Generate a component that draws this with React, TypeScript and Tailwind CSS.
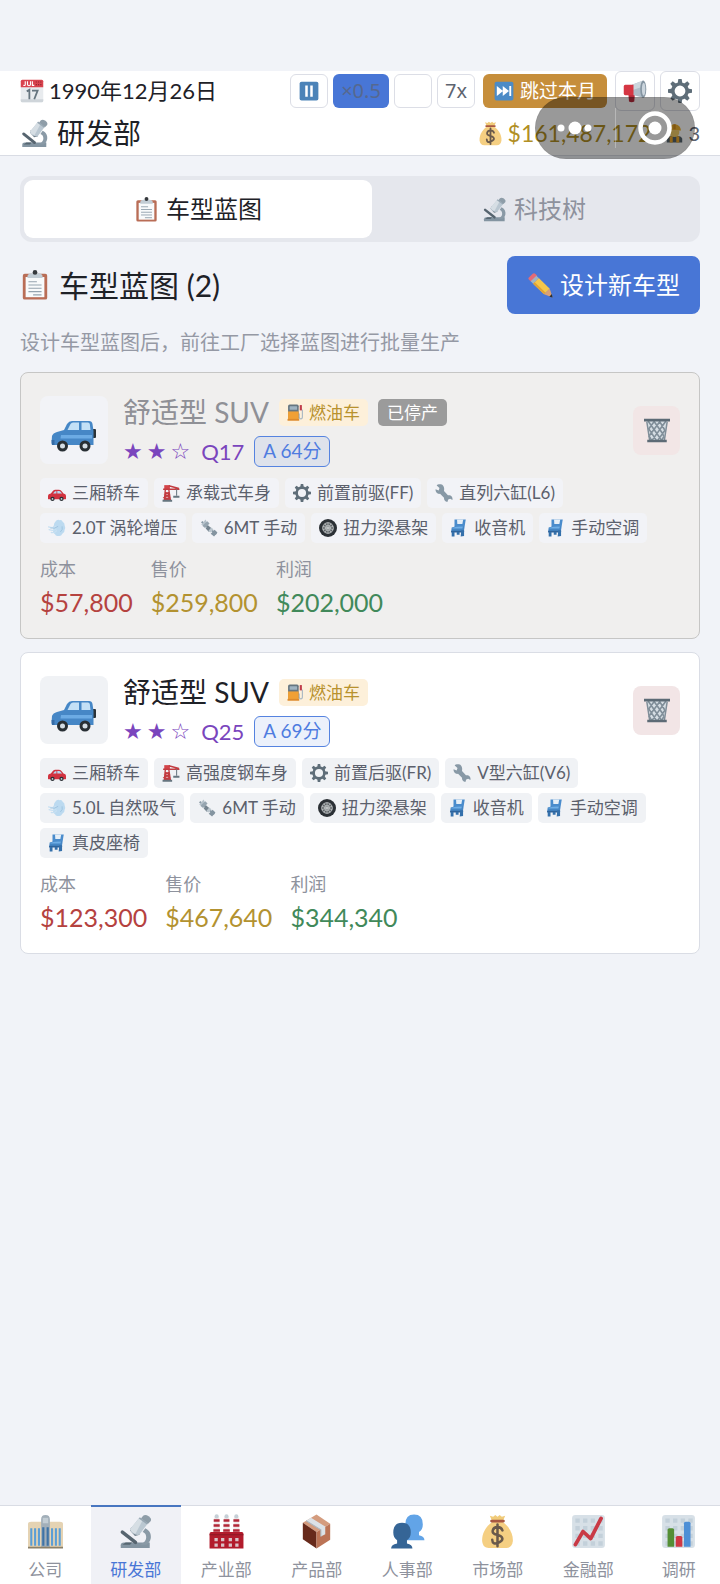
import type { ReactNode } from 'react';

type IconProps = { className?: string };

function Svg({ className = 'size-6', children }: { className?: string; children: ReactNode }) {
  return (
    <svg viewBox="0 0 32 32" className={`shrink-0 ${className}`} aria-hidden="true">
      {children}
    </svg>
  );
}

function CalendarIcon({ className }: IconProps) {
  return (
    <Svg className={className}>
      <path d="M1 10h30v19a2 2 0 0 1-2 2H3a2 2 0 0 1-2-2z" fill="#e8ebee" />
      <path d="M1 27h30v2a2 2 0 0 1-2 2H3a2 2 0 0 1-2-2z" fill="#cfd5da" />
      <path d="M1 3a2 2 0 0 1 2-2h26a2 2 0 0 1 2 2v8H1z" fill="#d9434e" />
      <path d="M7 3v4.500q0 1.500-2.500 1M10 3v4q0 2 2 2t2-2V3M16.500 3v5.500H19" fill="none" stroke="#fff" strokeWidth="1.500" />
      <path d="M21 4h1.500M24 4h1.500M27 4h1.500M21 7.500h1.500M24 7.500h1.500M27 7.500h1.500" stroke="#8e2730" strokeWidth="1.500" />
      <path d="M9 16.500l3.500-2V27M16 15.500h7.500L19 27" fill="none" stroke="#66757f" strokeWidth="2.400" />
    </Svg>
  );
}

function MicroscopeIcon({ className }: IconProps) {
  return (
    <Svg className={className}>
      <path d="M2.500 28.500q0-2.500 3-2.500h23.500v5H2.500z" fill="#8394a1" />
      <path d="M7 26h6l-2 2H4z" fill="#566671" />
      <path d="M20 28c5-2 6.500-5 5.500-8.500-.4-1.600-1.500-2.500-3-3l2.500-3.500c4 2 5.500 5.500 5 9-.5 3-2 5-4 6z" fill="#8a9aa6" />
      <path d="M4 16.500l12 9.500" stroke="#56646f" strokeWidth="3.200" strokeLinecap="round" />
      <path d="M11 15l4.500 5 4.500-1-8-7z" fill="#6e7d88" />
      <path d="M19.500 3.500l7.500 5.500-7.500 10q-6 1-8.500-5z" fill="#bac7d1" />
      <path d="M19.500 3.500l3 2.200-6.500 12.300q-4-1-5-4z" fill="#d6dee4" />
      <path d="M23 1.500q2-1.500 5 .5t2 4.500l-2.500 2.500-6.500-5z" fill="#8e9da8" />
      <path d="M19.500 3.500l7.500 5.500" stroke="#96a6b2" strokeWidth="1.500" />
    </Svg>
  );
}

function MoneyBagIcon({ className }: IconProps) {
  return (
    <Svg className={className}>
      <path d="M9 1.500l3 1 2-1.500 2 1.500L18 1l2 1.500 3-1-2.500 6h-9z" fill="#f0cb79" />
      <path d="M11.500 7h9c7 5 10 12 9.500 18-.4 4-2.500 6-6 6H8c-3.500 0-5.600-2-6-6C1.500 19 4.500 12 11.500 7z" fill="#f5cf82" />
      <path d="M10.500 6.500h11" stroke="#a95842" strokeWidth="2.400" strokeLinecap="round" />
      <path d="M20.500 15q-1-3-4.500-3t-4.300 3 3.700 4 5 3.300-4.200 4.200-5-3M16 9.500v20" fill="none" stroke="#69594b" strokeWidth="2.300" strokeLinecap="round" />
    </Svg>
  );
}

function PauseIcon({ className }: IconProps) {
  return (
    <Svg className={className}>
      <rect x="1" y="1" width="30" height="30" rx="3" fill="#4c83b8" />
      <path d="M10 7h4v18h-4zM18 7h4v18h-4z" fill="#fff" />
    </Svg>
  );
}

function SkipIcon({ className }: IconProps) {
  return (
    <Svg className={className}>
      <rect x="1" y="1" width="30" height="30" rx="3" fill="#4c8bc6" />
      <path d="M4.500 8l10 8-10 8zM14 8l10 8-10 8zM24.500 8h3v16h-3z" fill="#fff" />
    </Svg>
  );
}

function MegaphoneIcon({ className }: IconProps) {
  return (
    <Svg className={className}>
      <path d="M7 18h9l-1 12q-3.500 2-7 0z" fill="#b92c3c" />
      <path d="M12 7.500L27 2v23L12 21z" fill="#aebcc7" />
      <path d="M12 7.500L27 2v8L12 15z" fill="#ccd6dd" />
      <path d="M1 10q0-2.500 2-2.500h11v14H3q-2 0-2-2.500z" fill="#d53643" />
      <ellipse cx="27" cy="13.500" rx="4" ry="11.500" fill="#8494a1" />
      <ellipse cx="27.500" cy="13.500" rx="2.300" ry="8.500" fill="#cbd5dd" />
    </Svg>
  );
}

function GearIcon({ className }: IconProps) {
  return (
    <Svg className={className}>
      <circle cx="16" cy="16" r="9.500" fill="none" stroke="#5f6e79" strokeWidth="4.600" />
      {[0, 45, 90, 135, 180, 225, 270, 315].map((angle) => (
        <path key={angle} d="M12.800 6l1-6h4.400l1 6z" fill="#5f6e79" transform={`rotate(${angle} 16 16)`} />
      ))}
    </Svg>
  );
}

function WorkerIcon({ className }: IconProps) {
  return (
    <Svg className={className}>
      <path d="M3 31v-6q1-5 8-5h10q7 0 8 5v6z" fill="#55646f" />
      <path d="M8 31V21l5-1v11zM24 31V21l-5-1v11z" fill="#f0a92c" />
      <path d="M8 11h16v3q0 8-8 8t-8-8z" fill="#f5cf6a" />
      <path d="M5 11q1-9.500 11-10.500 10 1 11 10.500z" fill="#f4b52d" />
      <path d="M14 .5h4V9h-4z" fill="#d98f1c" />
    </Svg>
  );
}

function ClipboardIcon({ className }: IconProps) {
  return (
    <Svg className={className}>
      <rect x="3" y="4" width="26" height="27.500" rx="2" fill="#b96d56" />
      <path d="M6 7.500h20V29H6z" fill="#f8fafb" />
      <path d="M8 8.500V6q1-2.500 4-2.500h8q3 0 4 2.500v2.500z" fill="#c2cdd5" />
      <circle cx="16" cy="2.600" r="2.500" fill="#35393d" />
      <path d="M9 12.500h9M9 16h14M9 19.500h14M9 23h14M14 26.500h9" stroke="#94a3af" strokeWidth="1.200" />
    </Svg>
  );
}

function PencilIcon({ className }: IconProps) {
  return (
    <Svg className={className}>
      <path d="M2 7l5-5q2-1 3.500.5l2 2-7.500 7.500-2.500-2.500Q1 8.500 2 7z" fill="#e26b76" />
      <path d="M4.500 11.500l7-7 3 3-7 7z" fill="#9fb4c5" />
      <path d="M7.500 14.500l7-7L28 20.500l-7 7z" fill="#f6c74b" />
      <path d="M7.500 14.500l2-2L23 25.500l-2 2z" fill="#e0a336" />
      <path d="M21 27.500l7-7 3.500 11z" fill="#d9a077" />
      <path d="M27.500 30.500l3-3.500 1 4.500z" fill="#2a2f33" />
    </Svg>
  );
}

function SuvIcon({ className }: IconProps) {
  return (
    <svg viewBox="0 0 46 32" className={`shrink-0 ${className ?? ''}`} aria-hidden="true">
      <rect x="41" y="9" width="4" height="9" rx="1" fill="#2b3338" />
      <path d="M1 16q1-3 5-4l7-2 3-6q2-3 5-3h17q3 0 3.500 3l1 7v14H2q-1.500 0-1.500-2z" fill="#4687c6" />
      <path d="M17 9l2.500-5q1-1.500 2.500-1.500h6V10H16.500zM30.500 2.500h6.500q1.500 0 1.800 1.500l.7 6h-9z" fill="#c3e0f6" />
      <path d="M10 15h31v3.500H9.500z" fill="#6cabe4" />
      <path d="M.5 20h3v5H1z" fill="#356ba5" />
      <circle cx="11.500" cy="26" r="5.500" fill="#282f34" />
      <circle cx="34" cy="26" r="5.500" fill="#282f34" />
      <circle cx="11.500" cy="26" r="2.500" fill="#d3dce3" />
      <circle cx="34" cy="26" r="2.500" fill="#d3dce3" />
    </svg>
  );
}

function FuelIcon({ className }: IconProps) {
  return (
    <Svg className={className}>
      <path d="M25 8l4 4v12q0 4-3 4t-3-4v-5h-2" fill="none" stroke="#adbac4" strokeWidth="2.200" />
      <path d="M24 2h4v10h-4z" fill="#c13c4a" />
      <rect x="2" y="1" width="20" height="28" rx="3" fill="#667680" />
      <path d="M2 14h20v15H2z" fill="#f0a035" />
      <rect x="5" y="4" width="14" height="7" rx="1" fill="#9fb3c1" />
      <path d="M1 28h22v3.500H1z" fill="#dd8a2c" />
    </Svg>
  );
}

function RedCarIcon({ className }: IconProps) {
  return (
    <Svg className={className}>
      <path d="M0 21q0-3 5-4l4-5q1.500-2 4-2h6q3 0 5 2.500l3.500 4.500q4.500.5 4.500 4v5q0 1-1.500 1H1.500Q0 27 0 26z" fill="#d13340" />
      <path d="M9 17l3-3.500q1-1 3-1V17zM16.500 12.500h3q2 0 3.500 2L25 17h-8.500z" fill="#b8d9f0" />
      <circle cx="8" cy="26.500" r="3.800" fill="#292f33" />
      <circle cx="24" cy="26.500" r="3.800" fill="#292f33" />
      <circle cx="8" cy="26.500" r="1.600" fill="#ccd6dd" />
      <circle cx="24" cy="26.500" r="1.600" fill="#ccd6dd" />
    </Svg>
  );
}

function CraneIcon({ className }: IconProps) {
  return (
    <Svg className={className}>
      <path d="M4 29L6 9h6l3 20M5 14l8 5-9 5 10 4M13 14l-8 5 9 5-10 4" fill="none" stroke="#c23b40" strokeWidth="2.400" />
      <path d="M4 2h10v7H4z" fill="#d3444a" />
      <path d="M2 9.500h29M12 3l18 5" stroke="#c23b40" strokeWidth="2.600" />
      <path d="M26 9v12" stroke="#66757f" strokeWidth="1.800" />
      <path d="M20 21h11v3.500H20zM1 28h17v3.500H1z" fill="#66757f" />
    </Svg>
  );
}

function WrenchIcon({ className }: IconProps) {
  return (
    <Svg className={className}>
      <path
        d="M13 1.500C9 0 5 .5 3 2.500l5 4.500-1.500 4.500L1 9.500c-.5 5 3.500 9 8 8l7 7c-.5 4 2 7 6 7.500l1.500-4.500 3.500-1.500 4 2.500c1-6-3-9.500-8-8.500l-7-7.500c1-4.500 0-8.500-3-11z"
        fill="#8899a6"
      />
    </Svg>
  );
}

function WindIcon({ className }: IconProps) {
  return (
    <Svg className={className}>
      <path d="M13 5q3-5 8-3 4-1 5 3 4 2 3.500 6 2 4 0 8 .5 5-4 7-2 5-7 4-5 1-6-3-5-3-3-8-2-5 1-8 0-4 2.500-6z" fill="#bcdaf0" />
      <path d="M1 14q8 3 13-1M2 19q8 3 12-1M6 24q6 1 9-3" fill="none" stroke="#c8e0f2" strokeWidth="2.500" strokeLinecap="round" />
      <path d="M4 16q8 2 14-3M25 13q2 6-3 10" fill="none" stroke="#96bddc" strokeWidth="1.300" />
    </Svg>
  );
}

function GearboxIcon({ className }: IconProps) {
  return (
    <Svg className={className}>
      <path d="M3 5l26 22" stroke="#8798a4" strokeWidth="3.500" />
      <path d="M10 1l5 11-13-2z" fill="#b6c2cb" />
      <path d="M4 12l9-8 4 4-8 8z" fill="#96a5b0" />
      <path d="M14 11l7 6-5 6-6-6z" fill="#75848f" />
      <path d="M20 15l4 3-5 6-4-3z" fill="#bcc7cf" />
      <path d="M26 19l5 5-6 7-6-5z" fill="#8494a0" />
    </Svg>
  );
}

function WheelIcon({ className }: IconProps) {
  return (
    <Svg className={className}>
      <circle cx="16" cy="16" r="16" fill="#2b3035" />
      <circle cx="16" cy="16" r="9.500" fill="#5e6366" stroke="#c5c9cb" strokeWidth="1.500" />
      {[0, 36, 72, 108, 144].map((angle) => (
        <path key={angle} d="M16 6.500v19" stroke="#c5c9cb" strokeWidth="1.200" transform={`rotate(${angle} 16 16)`} />
      ))}
      <circle cx="16" cy="16" r="4.500" fill="none" stroke="#c5c9cb" strokeWidth="1.200" />
    </Svg>
  );
}

function SeatIcon({ className }: IconProps) {
  return (
    <Svg className={className}>
      <path d="M8 1h20l-3 18H8z" fill="#4a8ccc" />
      <path d="M12.500 1h11l-1.500 8h-9z" fill="#e6eff7" />
      <path d="M3 15q9-4 22-2v10H2z" fill="#4586c4" />
      <path d="M5 15.500q8-3 18-2l-1 3.500H4z" fill="#6faee6" />
      <path d="M2 21h23v3H2z" fill="#2f639a" />
      <path d="M3 23h5v8H3zM12 23h5v5h-5zM20 20h5v10l-6 1z" fill="#3470ab" />
    </Svg>
  );
}

function BinIcon({ className }: IconProps) {
  return (
    <Svg className={className}>
      <path d="M3 5h26l-3.500 24h-19z" fill="#d6dee4" />
      <path
        d="M5 5l10 14 7.500 11M12 5l10 14 2.500 5M19 5l6.500 11M5.500 14L16 30M6 23l4 7M13 5L5.500 15M20 5L6.500 23M27 5L9 30M26 16L16 30M24.500 24L21 30"
        fill="none"
        stroke="#808e99"
        strokeWidth="2"
      />
      <path d="M3.500 6L7 29M28.500 6L25 29" stroke="#808e99" strokeWidth="1.800" />
      <path d="M0 2h32v3.500H0zM4 28h24v3H4z" fill="#5d6b76" />
    </Svg>
  );
}

function OfficeIcon({ className }: IconProps) {
  return (
    <Svg className={className}>
      <path d="M0 9q0-2 3-2h26q3 0 3 2v22H0z" fill="#e5d3b3" />
      <path d="M12 5q0-4 4-4t4 4v26h-8z" fill="#a2afb9" />
      <path d="M3 13v16M6.500 13v16M10 13v16M22 13v16M25.500 13v16M29 13v16" stroke="#5a9ed6" strokeWidth="1.900" />
      <path d="M14 12v17M18 12v17" stroke="#3e73a6" strokeWidth="2" />
      <path d="M0 30h32v1.500H0z" fill="#8b8068" />
      <path d="M13.500 3.500h5v5h-5z" fill="#c3cdd4" />
    </Svg>
  );
}

function FactoryIcon({ className }: IconProps) {
  return (
    <Svg className={className}>
      {[4, 13, 22].map((x) => (
        <g key={x}>
          <path d={`M${x + 0.8} 3h4.400l.8 15h-6z`} fill="#f0e9ea" />
          <path d={`M${x + 0.3} 6h5.400M${x + 0.2} 10.500h5.600M${x} 15h6`} stroke="#b12738" strokeWidth="2.300" />
          <circle cx={x + 3} cy="2.200" r="1.900" fill="#c5cfd6" />
        </g>
      ))}
      <path d="M.5 18q0-1.500 1.500-1.500h28q1.500 0 1.500 1.500v13.500H.5z" fill="#b21b2c" />
      <path d="M.5 19h31" stroke="#8b1824" strokeWidth="1" />
      <path d="M5 22h3v3H5zM11 22h3v3h-3zM18 22h3v3h-3zM24 22h3v3h-3zM5 27h3v3H5zM11 27h3v3h-3zM18 27h3v3h-3zM24 27h3v3h-3z" fill="#d9c3c8" />
    </Svg>
  );
}

function PackageIcon({ className }: IconProps) {
  return (
    <Svg className={className}>
      <path d="M16 .5L3.500 8 16 16.500 28.500 9z" fill="#d49c7e" />
      <path d="M3.500 8v15L16 31.500v-15z" fill="#672a1b" />
      <path d="M28.500 9v14.500L16 31.500v-15z" fill="#bb7355" />
      <path d="M6.500 6.200l4.500-2.700 13 8v7l-4 2v-6z" fill="#dce2e7" />
      <path d="M6.500 6.200L20 14.500v6" fill="none" stroke="#aeb8c0" strokeWidth="1" />
    </Svg>
  );
}

function PeopleIcon({ className }: IconProps) {
  return (
    <Svg className={className}>
      <path d="M22 .5q8 0 8 9 0 5-3.500 7v3q5 1 5 4.500H12.500q0-3.500 5-4.500v-3Q14 14.500 14 9.500q0-9 8-9z" fill="#62a4e7" />
      <path d="M11 8q8 0 8 9 0 5-3.500 7v3q5 1 5 4.500H1Q1 28 6.500 27v-3Q3 22 3 17q0-9 8-9z" fill="#356596" />
    </Svg>
  );
}

function ChartGrid() {
  return (
    <>
      <rect x="1" y="1" width="30" height="30" rx="3" fill="#d7e0e7" />
      <path
        d="M4 4h4v4H4zM11 4h4v4h-4zM18 4h4v4h-4zM25 4h4v4h-4zM4 11h4v4H4zM11 11h4v4h-4zM18 11h4v4h-4zM25 11h4v4h-4zM4 18h4v4H4zM11 18h4v4h-4zM18 18h4v4h-4zM25 18h4v4h-4zM4 25h4v4H4zM11 25h4v4h-4zM18 25h4v4h-4zM25 25h4v4h-4z"
        fill="#c3d0da"
      />
    </>
  );
}

function TrendIcon({ className }: IconProps) {
  return (
    <Svg className={className}>
      <ChartGrid />
      <path d="M4 28l7-12 7 6.500L27.500 4" fill="none" stroke="#c93a46" strokeWidth="3.400" strokeLinecap="round" strokeLinejoin="round" />
    </Svg>
  );
}

function BarsIcon({ className }: IconProps) {
  return (
    <Svg className={className}>
      <ChartGrid />
      <path d="M6 30V14.500q0-1.500 1.500-1.500h3q1.500 0 1.500 1.500V30z" fill="#548e35" />
      <path d="M13.500 30v-8.500q0-1.500 1.500-1.500h3q1.500 0 1.500 1.500V30z" fill="#cf3844" />
      <path d="M21 30V8.500Q21 7 22.500 7h3Q27 7 27 8.500V30z" fill="#4d8fd6" />
    </Svg>
  );
}

type Spec = { icon: (props: IconProps) => ReactNode; text: string };
type Blueprint = {
  id: string;
  name: string;
  retired: boolean;
  quality: string;
  grade: string;
  specs: Spec[];
  cost: string;
  price: string;
  profit: string;
};

const blueprints: Blueprint[] = [
  {
    id: 'suv-1',
    name: '舒适型 SUV',
    retired: true,
    quality: 'Q17',
    grade: 'A 64分',
    specs: [
      { icon: RedCarIcon, text: '三厢轿车' },
      { icon: CraneIcon, text: '承载式车身' },
      { icon: GearIcon, text: '前置前驱(FF)' },
      { icon: WrenchIcon, text: '直列六缸(L6)' },
      { icon: WindIcon, text: '2.0T 涡轮增压' },
      { icon: GearboxIcon, text: '6MT 手动' },
      { icon: WheelIcon, text: '扭力梁悬架' },
      { icon: SeatIcon, text: '收音机' },
      { icon: SeatIcon, text: '手动空调' },
    ],
    cost: '$57,800',
    price: '$259,800',
    profit: '$202,000',
  },
  {
    id: 'suv-2',
    name: '舒适型 SUV',
    retired: false,
    quality: 'Q25',
    grade: 'A 69分',
    specs: [
      { icon: RedCarIcon, text: '三厢轿车' },
      { icon: CraneIcon, text: '高强度钢车身' },
      { icon: GearIcon, text: '前置后驱(FR)' },
      { icon: WrenchIcon, text: 'V型六缸(V6)' },
      { icon: WindIcon, text: '5.0L 自然吸气' },
      { icon: GearboxIcon, text: '6MT 手动' },
      { icon: WheelIcon, text: '扭力梁悬架' },
      { icon: SeatIcon, text: '收音机' },
      { icon: SeatIcon, text: '手动空调' },
      { icon: SeatIcon, text: '真皮座椅' },
    ],
    cost: '$123,300',
    price: '$467,640',
    profit: '$344,340',
  },
];

const departments = [
  { icon: OfficeIcon, label: '公司' },
  { icon: MicroscopeIcon, label: '研发部' },
  { icon: FactoryIcon, label: '产业部' },
  { icon: PackageIcon, label: '产品部' },
  { icon: PeopleIcon, label: '人事部' },
  { icon: MoneyBagIcon, label: '市场部' },
  { icon: TrendIcon, label: '金融部' },
  { icon: BarsIcon, label: '调研' },
];

const speedButton =
  "flex h-[34px] w-[38px] items-center justify-center rounded-md border border-[#dcdee6] bg-white font-['Noto_Sans'] text-[20px] text-[#5d6470]";
const toolButton = 'flex h-10 w-10 items-center justify-center rounded-md border border-[#dcdee6] bg-white';

function Header() {
  return (
    <header className="relative border-b border-[#d9dce4] bg-white px-5">
      <div className="flex h-10 items-center justify-between">
        <div className="flex items-center gap-[5px] text-[22px] leading-10">
          <CalendarIcon className="size-6" />
          <span>1990年12月26日</span>
        </div>
        <div className="flex items-center gap-2">
          <div className="flex gap-[5px]">
            <button className={speedButton} aria-label="暂停">
              <PauseIcon className="size-5" />
            </button>
            <button className="flex h-[34px] w-14 items-center justify-center rounded-md bg-[#4876d6] font-['Noto_Sans'] text-[20px] text-[#56688f]">
              ×0.5
            </button>
            <button className={speedButton} aria-label="1x" />
            <button className={speedButton}>7x</button>
          </div>
          <button className="flex h-[34px] items-center gap-[6px] rounded-md bg-[#c68e3b] px-[11px] text-[19px] text-white">
            <SkipIcon className="size-5" />
            跳过本月
          </button>
          <div className="flex gap-[5px]">
            <button className={toolButton} aria-label="公告">
              <MegaphoneIcon className="size-6" />
            </button>
            <button className={toolButton} aria-label="设置">
              <GearIcon className="size-6" />
            </button>
          </div>
        </div>
      </div>
      <div className="flex h-11 items-center justify-between">
        <h1 className="flex items-center gap-2 text-[28px] leading-10">
          <MicroscopeIcon className="size-[29px]" />
          研发部
        </h1>
        <div className="flex items-center gap-[14px]">
          <span className="flex items-center gap-[5px] text-[23px] text-[#b18f25]">
            <MoneyBagIcon className="size-[25px]" />
            $161,487,172
          </span>
          <span className="flex items-center gap-1 text-[20px] text-[#5a6270]">
            <WorkerIcon className="size-[19px]" />3
          </span>
        </div>
      </div>
      <div className="absolute top-[26px] right-[25px] flex h-[62px] w-40 items-center rounded-full border border-black/5 bg-black/40">
        <button className="flex flex-1 justify-center" aria-label="更多">
          <svg viewBox="0 0 36 14" className="h-[14px] w-9">
            <circle cx="4" cy="7" r="3.500" fill="#fff" />
            <circle cx="18" cy="7" r="6.500" fill="#fff" />
            <circle cx="31" cy="7" r="3.500" fill="#fff" />
          </svg>
        </button>
        <span className="h-10 w-px bg-white/30" />
        <button className="flex flex-1 justify-center" aria-label="关闭">
          <svg viewBox="0 0 34 34" className="size-[34px]">
            <circle cx="17" cy="17" r="14.500" fill="none" stroke="#fff" strokeWidth="4.500" />
            <circle cx="17" cy="17" r="6.500" fill="#fff" />
          </svg>
        </button>
      </div>
    </header>
  );
}

function Stat({ label, value, tone }: { label: string; value: string; tone: string }) {
  return (
    <div>
      <dt className="text-[18px] leading-7 text-[#8e929d]">{label}</dt>
      <dd className={`mt-px text-[25px] leading-9 ${tone}`}>{value}</dd>
    </div>
  );
}

function BlueprintCard({ item }: { item: Blueprint }) {
  const frame = item.retired ? 'border-[#c6c6c5] bg-[#f0efee]' : 'border-[#dadde5] bg-white';
  const soft = item.retired ? 'bg-[#f2f3f7]' : 'bg-[#f0f2f5]';
  return (
    <article className={`rounded-lg border px-[19px] pt-5 pb-[18px] ${frame}`}>
      <div className="flex items-center">
        <div className={`flex size-[68px] items-center justify-center rounded-lg pt-3 ${soft}`}>
          <SuvIcon className="h-8 w-[46px]" />
        </div>
        <div className="ml-[15px] flex-1">
          <div className="flex h-[39px] items-center gap-[10px]">
            <h3 className={`text-[28px] leading-[39px] ${item.retired ? 'text-[#8f9096]' : 'text-[#1e2127]'}`}>{item.name}</h3>
            <span className="flex h-[27px] items-center gap-[5px] rounded-[5px] bg-[#fdf0da] px-2 text-[17px] text-[#b8922e]">
              <FuelIcon className="size-[17px]" />
              燃油车
            </span>
            {item.retired && (
              <span className="flex h-[27px] items-center rounded-[5px] bg-[#9b9b9b] px-[9px] text-[17px] text-white">已停产</span>
            )}
          </div>
          <div className="mt-1 flex h-[31px] items-center text-[#7a45bd]">
            <span className="flex gap-1 font-['DejaVu_Sans'] text-[22px]">
              <span>★</span>
              <span>★</span>
              <span>☆</span>
            </span>
            <span className="ml-[11px] text-[22px]">{item.quality}</span>
            <span className="ml-[10px] flex h-[31px] items-center rounded-md border border-[#5583e0] bg-[#4876d6]/10 px-2 text-[19px] text-[#4f7ce0]">
              {item.grade}
            </span>
          </div>
        </div>
        <button
          className={`flex h-[49px] w-[47px] items-center justify-center rounded-lg ${item.retired ? 'bg-[#f2e6e6]' : 'bg-[#f2e5e6]'}`}
          aria-label="删除"
        >
          <BinIcon className="size-[26px]" />
        </button>
      </div>
      <ul className="mt-[11px] flex flex-wrap gap-x-[6px] gap-y-[5px]">
        {item.specs.map(({ icon: Icon, text }) => (
          <li key={text} className={`flex h-[30px] items-center gap-[6px] rounded-[5px] px-2 text-[17px] text-[#5b606c] ${soft}`}>
            <Icon className="size-[18px]" />
            {text}
          </li>
        ))}
      </ul>
      <dl className="mt-3 flex gap-[18px]">
        <Stat label="成本" value={item.cost} tone="text-[#b5423f]" />
        <Stat label="售价" value={item.price} tone="text-[#b39230]" />
        <Stat label="利润" value={item.profit} tone="text-[#41895a]" />
      </dl>
    </article>
  );
}

export default function App() {
  return (
    <div className="flex min-h-screen flex-col overflow-x-hidden bg-[#f1f3f8] pt-[71px] font-[Lato,'Noto_Sans_CJK_SC',sans-serif] text-[#1e2127]">
      <Header />
      <main className="flex-1 px-5 pt-5 pb-5">
        <div className="flex h-[66px] rounded-xl bg-[#e5e7ed] p-1 text-[24px]">
          <button className="flex flex-auto items-center justify-center gap-[7px] rounded-[9px] bg-white">
            <ClipboardIcon className="size-[25px]" />
            车型蓝图
          </button>
          <button className="flex flex-auto items-center justify-center gap-[7px] rounded-[9px] text-[#8e929d]">
            <MicroscopeIcon className="size-[25px]" />
            科技树
          </button>
        </div>
        <div className="mt-[14px] flex items-center justify-between">
          <h2 className="flex items-center gap-[9px] text-[30px] leading-10">
            <ClipboardIcon className="size-[30px]" />
            车型蓝图 (2)
          </h2>
          <button className="flex h-[58px] items-center gap-[7px] rounded-lg bg-[#4876d6] px-5 text-[24px] text-white">
            <PencilIcon className="size-[26px]" />
            设计新车型
          </button>
        </div>
        <p className="mt-[13px] mb-[15px] text-[20px] leading-[30px] text-[#9599a5]">设计车型蓝图后，前往工厂选择蓝图进行批量生产</p>
        <div className="flex flex-col gap-[13px]">
          {blueprints.map((item) => (
            <BlueprintCard key={item.id} item={item} />
          ))}
        </div>
      </main>
      <nav className="border-t border-[#d9dce4] bg-white">
        <div className="-mt-px -mr-1 flex">
          {departments.map(({ icon: Icon, label }, index) => (
            <a
              key={label}
              href="#"
              className={`flex h-[79px] flex-1 flex-col items-center gap-2 border-t-2 pt-[7px] text-[17px] leading-[26px] ${
                index === 1 ? 'border-[#4876c0] bg-[#f0f1f6] text-[#4876d6]' : 'border-transparent text-[#8e929d]'
              }`}
            >
              <Icon className="size-[35px]" />
              {label}
            </a>
          ))}
        </div>
      </nav>
    </div>
  );
}
